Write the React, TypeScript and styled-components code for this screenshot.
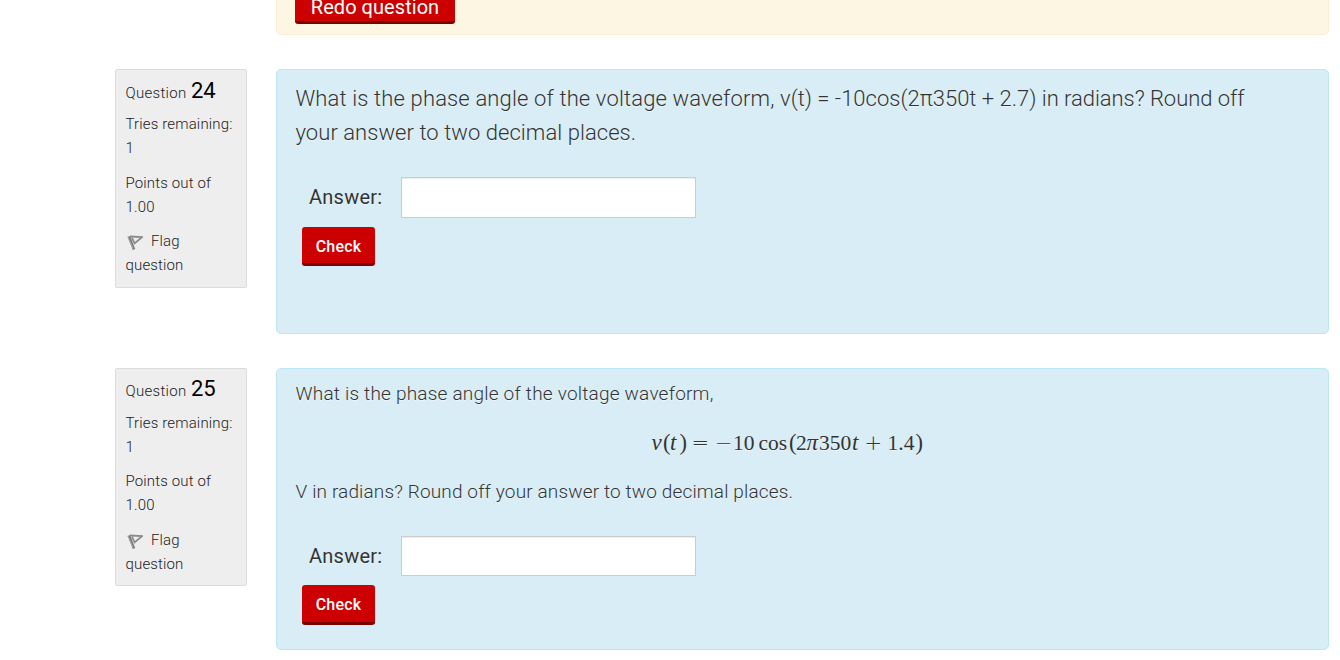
import styled, { createGlobalStyle } from "styled-components";

const GlobalStyle = createGlobalStyle`
  html, body {
    margin: 0;
    background: #fff;
    overflow: hidden;
  }
  p {
    margin: 0;
  }
`;

const StyledPage = styled.main`
  box-sizing: border-box;
  display: flex;
  flex-direction: column;
  gap: 34px;
  width: 1340px;
  height: 660px;
  padding: 0 11px 0 115px;
  overflow: hidden;
  color: #333;
  font-family: Roboto, "Liberation Sans", sans-serif;
  font-weight: 300;
`;

const StyledQuestion = styled.section`
  display: flex;
  align-items: flex-start;
  justify-content: flex-end;
  flex-shrink: 0;
  gap: 29px;
`;

const StyledInfo = styled.aside<{ $height: number }>`
  box-sizing: border-box;
  flex: 0 0 132px;
  height: ${({ $height }) => $height}px;
  padding: 0 9px 0 9.5px;
  background: #eee;
  border: 1px solid #dcdcdc;
  border-radius: 2px;
  color: #222;
  font-size: 15px;
  line-height: 24px;
  letter-spacing: 0.15px;
`;

const StyledHeading = styled.h3<{ $top: number }>`
  height: 30px;
  margin: 0;
  padding: ${({ $top }) => $top}px 0 ${({ $top }) => 12 - $top}px;
  font-size: 15px;
  font-weight: 300;
  line-height: 30px;
  letter-spacing: 0.3px;
`;

const StyledNumber = styled.span`
  margin-left: 0.5px;
  color: #000;
  font-size: 22px;
  font-weight: 400;
  letter-spacing: 0;
`;

const StyledDetail = styled.p<{ $gap?: number }>`
  margin-bottom: ${({ $gap }) => $gap ?? 10}px;
`;

const StyledFlag = styled.svg`
  width: 16px;
  height: 16px;
  margin: 0 8.5px 0 1px;
  vertical-align: -4px;
`;

const StyledPanel = styled.div<{ $height: number; $warning?: boolean }>`
  box-sizing: border-box;
  flex: 0 0 1053px;
  height: ${({ $height }) => $height}px;
  padding: 0 18.5px;
  background: ${({ $warning }) => ($warning ? "#fdf6e2" : "#d9edf6")};
  border: 1px solid ${({ $warning }) => ($warning ? "#fbeed5" : "#bce8f1")};
  border-top-width: ${({ $warning }) => ($warning ? 0 : 1)}px;
  border-radius: ${({ $warning }) => ($warning ? "0 0 5px 5px" : "5px")};
  text-shadow: 0 1px 0 rgba(255, 255, 255, 0.5);
`;

const StyledLargeText = styled.p`
  padding-top: 12px;
  font-size: 22px;
  line-height: 34px;
  letter-spacing: 0.055px;
  white-space: nowrap;
`;

const StyledPhrase = styled.span<{ $spacing: number }>`
  letter-spacing: ${({ $spacing }) => $spacing}px;
`;

const StyledText = styled.p<{ $top?: number; $spacing: number }>`
  padding-top: ${({ $top }) => $top ?? 0}px;
  font-size: 19px;
  line-height: 30px;
  letter-spacing: ${({ $spacing }) => $spacing}px;
  white-space: nowrap;
`;

const StyledFormula = styled.div`
  display: grid;
  grid-template-columns: 11.5px 7px 9.5px 13px 23.5px 17px 25.5px 30.5px 7px 10.5px 12.5px 33px 13.5px 22px 28px 7px;
  align-items: baseline;
  height: 30px;
  margin: 19px 0 19px 356px;
  font-family: "Liberation Serif", serif;
  font-size: 21.5px;
  font-weight: 400;
  line-height: 30px;
  white-space: nowrap;

  i {
    font-size: 23px;
  }
`;

const StyledParen = styled.span`
  font-size: 22.5px;
`;

const StyledOperator = styled.span`
  font-family: "DejaVu Sans", sans-serif;
  font-size: 21px;
  font-weight: 200;
  margin-left: -1px;
`;

const StyledAnswer = styled.label<{ $top: number }>`
  display: flex;
  align-items: center;
  gap: 18px;
  margin: ${({ $top }) => $top}px 0 9px 13.5px;
  font-size: 20px;
  font-weight: 400;
`;

const StyledLabel = styled.span<{ $lift: number }>`
  width: 74px;
  padding-bottom: ${({ $lift }) => $lift}px;
  letter-spacing: 0.25px;
`;

const StyledInput = styled.input<{ $height: number }>`
  box-sizing: border-box;
  width: 295px;
  height: ${({ $height }) => $height}px;
  padding: 4px 6px;
  border: 1px solid #ccc;
  border-radius: 0;
  background: #fff;
  box-shadow: inset 0 1px 1px rgba(0, 0, 0, 0.075);
`;

const StyledButton = styled.button<{ $height: number }>`
  display: block;
  box-sizing: border-box;
  width: 73px;
  height: ${({ $height }) => $height}px;
  margin: 0 0 0 6.5px;
  padding: 2px 0 0;
  border: 0;
  border-bottom: 3px solid #7a0000;
  border-radius: 3px;
  background: #c00;
  color: #fff;
  font-family: inherit;
  font-size: 16px;
  font-weight: 500;
  letter-spacing: 0.2px;
`;

/* scrolled partly out of view, so it is pulled above the top edge */
const StyledRedoButton = styled(StyledButton)`
  width: 160px;
  margin: -16px 0 0 -0.5px;
  padding: 8px 0 0;
  font-size: 20px;
  font-weight: 400;
  letter-spacing: 0.05px;
`;

type InfoProps = {
  number: number;
  height: number;
  headingTop: number;
  triesGap: number;
};

function QuestionInfo({ number, height, headingTop, triesGap }: InfoProps) {
  return (
    <StyledInfo $height={height}>
      <StyledHeading $top={headingTop}>
        Question <StyledNumber>{number}</StyledNumber>
      </StyledHeading>
      <StyledDetail $gap={triesGap}>
        Tries remaining:
        <br />1
      </StyledDetail>
      <StyledDetail $gap={21 - triesGap}>
        Points out of
        <br />
        1.00
      </StyledDetail>
      <StyledDetail>
        <StyledFlag viewBox="0 0 16 16" fill="none">
          <path d="M1.8 2.4 L7 15.5" stroke="#7a7a7a" strokeWidth="2.6" />
          <path
            d="M3 2.5 L15 3.2 L7.6 9.4 L5 3.8"
            stroke="#8a8a8a"
            strokeWidth="1.8"
          />
          <path d="M0.8 2.8 L6 14.6" stroke="#bbb" strokeWidth="0.8" />
        </StyledFlag>
        Flag question
      </StyledDetail>
    </StyledInfo>
  );
}

type AnswerProps = {
  top: number;
  lift: number;
  inputHeight: number;
  buttonHeight: number;
};

function AnswerForm({ top, lift, inputHeight, buttonHeight }: AnswerProps) {
  return (
    <>
      <StyledAnswer $top={top}>
        <StyledLabel $lift={lift}>Answer:</StyledLabel>
        <StyledInput $height={inputHeight} type="text" />
      </StyledAnswer>
      <StyledButton $height={buttonHeight}>Check</StyledButton>
    </>
  );
}

function Formula() {
  return (
    <StyledFormula>
      <i>v</i>
      <StyledParen>(</StyledParen>
      <i>t</i>
      <StyledParen>)</StyledParen>
      <StyledOperator>=</StyledOperator>
      <StyledOperator>−</StyledOperator>
      <span>10</span>
      <span>cos</span>
      <StyledParen>(</StyledParen>
      <span>2</span>
      <i>π</i>
      <span>350</span>
      <i>t</i>
      <StyledOperator>+</StyledOperator>
      <span>1.4</span>
      <StyledParen>)</StyledParen>
    </StyledFormula>
  );
}

function App() {
  return (
    <>
      <GlobalStyle />
      <StyledPage>
        <StyledQuestion>
          <StyledPanel $height={35} $warning>
            <StyledRedoButton $height={40}>Redo question</StyledRedoButton>
          </StyledPanel>
        </StyledQuestion>

        <StyledQuestion>
          <QuestionInfo number={24} height={219} headingTop={6} triesGap={11} />
          <StyledPanel $height={265}>
            <StyledLargeText>
              <StyledPhrase $spacing={0.14}>
                What is the phase angle of the voltage waveform,{" "}
              </StyledPhrase>
              <StyledPhrase $spacing={0}>
                v(t) = -10cos(2π350t + 2.7){" "}
              </StyledPhrase>
              <StyledPhrase $spacing={-0.05}>in radians? Round off</StyledPhrase>
              <br />
              your answer to two decimal places.
            </StyledLargeText>
            <AnswerForm top={27} lift={2} inputHeight={41} buttonHeight={39} />
          </StyledPanel>
        </StyledQuestion>

        <StyledQuestion>
          <QuestionInfo number={25} height={218} headingTop={5} triesGap={10} />
          <StyledPanel $height={282}>
            <StyledText $top={10} $spacing={0.21}>
              What is the phase angle of the voltage waveform,
            </StyledText>
            <Formula />
            <StyledText $spacing={0.14}>
              V in radians? Round off your answer to two decimal places.
            </StyledText>
            <AnswerForm top={29} lift={0} inputHeight={40} buttonHeight={40} />
          </StyledPanel>
        </StyledQuestion>
      </StyledPage>
    </>
  );
}

export default App;
